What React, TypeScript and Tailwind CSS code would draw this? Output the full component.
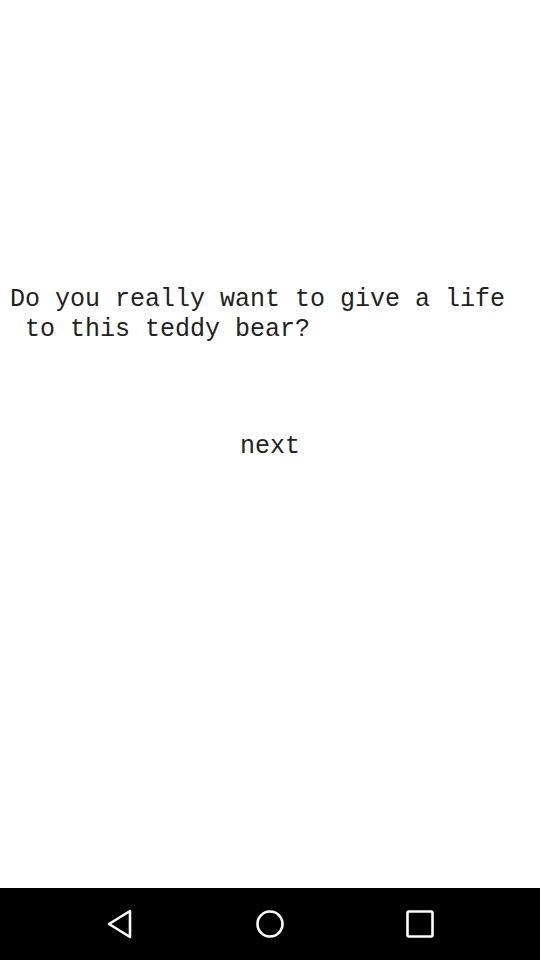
export default function App() {
  return (
    <div className="flex h-[960px] w-[540px] flex-col bg-white">
      <div className="flex flex-1 flex-col pt-[285px] font-['Liberation_Mono',monospace] text-[25px] leading-[30px] text-[#222]">
        <p className="whitespace-pre pl-[10px]">
          {'Do you really want to give a life\n to this teddy bear?'}
        </p>
        <button className="mt-[87px] self-center">next</button>
      </div>
      <nav className="flex h-[72px] items-center justify-center gap-[120px] bg-black">
        <svg width="30" height="32" viewBox="0 0 30 32" fill="none" stroke="#fff" strokeWidth="2.6" strokeLinejoin="round">
          <path d="M25 3 L4 16 L25 29 Z" />
        </svg>
        <svg width="30" height="30" viewBox="0 0 30 30" fill="none" stroke="#fff" strokeWidth="2.6">
          <circle cx="15" cy="15" r="12.5" />
        </svg>
        <svg width="30" height="30" viewBox="0 0 30 30" fill="none" stroke="#fff" strokeWidth="2.6" strokeLinejoin="round">
          <rect x="2.5" y="2.5" width="25" height="25" rx="1.5" />
        </svg>
      </nav>
    </div>
  )
}
